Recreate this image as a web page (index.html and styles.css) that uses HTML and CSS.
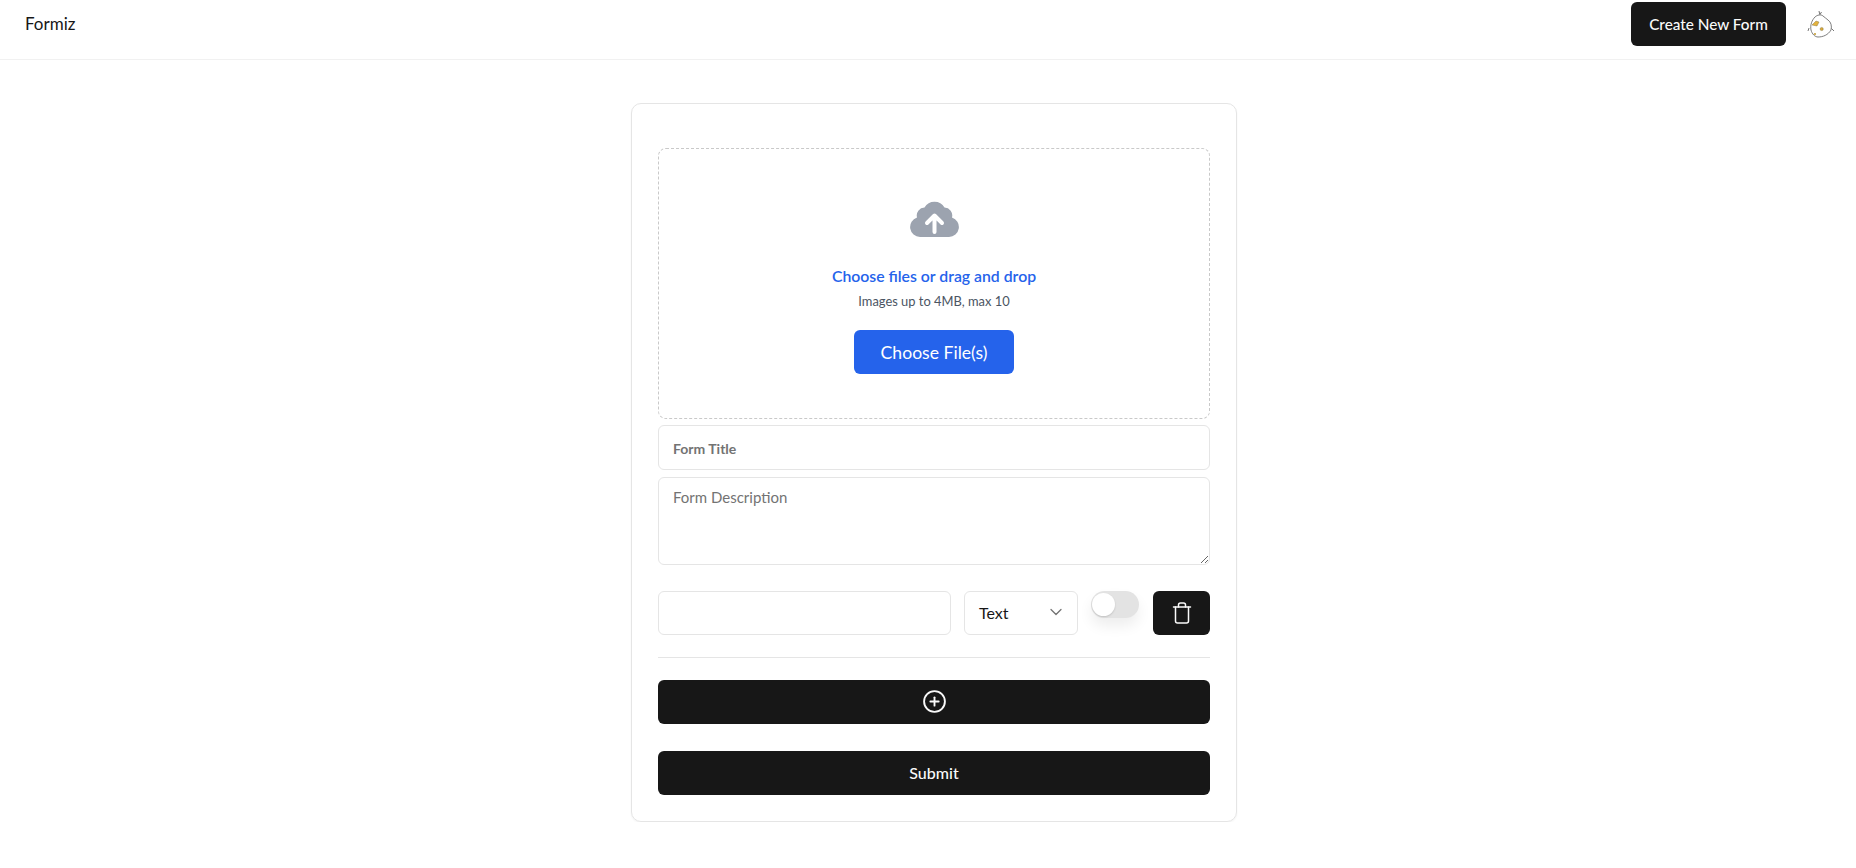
FILE: index.html
```html
<!DOCTYPE html>
<html lang="en">
<head>
    <meta charset="UTF-8">
    <meta name="viewport" content="width=device-width, initial-scale=1.0">
    <title>Formiz</title>
    <link rel="stylesheet" href="styles.css">
</head>
<body>
    <header class="topbar">
        <a class="brand" href="#">Formiz</a>
        <div class="topbar-actions">
            <button class="btn-create" type="button">Create New Form</button>
            <svg class="avatar" viewBox="0 0 28 28" aria-hidden="true">
                <path d="M4 20c-1-5 1-10 4-13 2-2 6-3 8-1 2 1 3 3 5 4 3 2 4 6 3 10-3 5-8 7-13 7-3 0-6-3-7-7z" fill="#fff" stroke="#6f6f6f" stroke-width=".9"/>
                <path d="M5 15l4-4 3 1-2 4z" fill="#e3b23c" stroke="#7a6a3a" stroke-width=".4"/>
                <circle cx="14.700" cy="19" r="1.600" fill="#d9a93a" stroke="#7a6a3a" stroke-width=".4"/>
                <circle cx="8" cy="24" r="1.100" fill="#c9a038"/>
                <path d="M12 1l.8 3.500M14.500 2l-1.500 2.500M1 21l1-3M27 21l-2.500-2.500" stroke="#666" stroke-width=".9" fill="none"/>
            </svg>
        </div>
    </header>

    <main class="page">
        <form class="form-card">
            <div class="dropzone">
                <svg class="cloud" viewBox="0 0 49 36" aria-hidden="true">
                    <path class="cloud-shape" d="M10 36A10 10 0 0 1 7 16.500A8 8 0 0 1 14.500 6.500A11.500 11.500 0 0 1 34.500 6.500A8 8 0 0 1 42 16.500A10 10 0 0 1 39 36Z"/>
                    <path class="cloud-arrow" d="M24.500 31V15M17 22l7.500-7.500L32 22"/>
                </svg>
                <span class="drop-label">Choose files or drag and drop</span>
                <span class="drop-hint">Images up to 4MB, max 10</span>
                <button class="btn-choose" type="button">Choose File(s)</button>
            </div>

            <input class="field field-title" type="text" placeholder="Form Title">
            <textarea class="field field-desc" placeholder="Form Description"></textarea>

            <div class="question-row">
                <input class="field field-question" type="text">
                <button class="type-select" type="button">
                    <span>Text</span>
                    <svg class="icon-chevron" viewBox="0 0 24 24" aria-hidden="true"><path d="m6 9 6 6 6-6"/></svg>
                </button>
                <span class="toggle"><span class="toggle-thumb"></span></span>
                <button class="btn-delete" type="button" aria-label="Delete">
                    <svg class="icon-line" viewBox="0 0 24 24" aria-hidden="true">
                        <path d="M3.500 6h17"/>
                        <path d="M18.500 6v14c0 1-1 2-2 2h-9c-1 0-2-1-2-2V6"/>
                        <path d="M8.500 6V4c0-1 1-2 2-2h3c1 0 2 1 2 2v2"/>
                    </svg>
                </button>
            </div>

            <hr class="divider">

            <button class="btn-wide btn-add" type="button" aria-label="Add question">
                <svg class="icon-line" viewBox="0 0 24 24" aria-hidden="true">
                    <circle cx="12" cy="12" r="10"/>
                    <path d="M8 12h8"/>
                    <path d="M12 8v8"/>
                </svg>
            </button>
            <button class="btn-wide btn-submit" type="submit">Submit</button>
        </form>
    </main>
</body>
</html>
```

FILE: styles.css
```css
* {
    box-sizing: border-box;
}

body {
    margin: 0;
    background: #fff;
    color: #171717;
    font-family: Lato, "Open Sans", sans-serif;
}

button,
input,
textarea {
    font-family: inherit;
}

.topbar {
    display: flex;
    justify-content: space-between;
    align-items: center;
    height: 60px;
    padding: 0 21px 11px 25px;
    border-bottom: 1px solid #f1f1f1;
}

.brand {
    margin-bottom: 2px;
    color: #171717;
    font-size: 17px;
    text-decoration: none;
}

.topbar-actions {
    display: flex;
    align-items: center;
    gap: 21px;
}

.btn-create {
    width: 155px;
    height: 44px;
    padding-bottom: 2px;
    border: none;
    border-radius: 6px;
    background: #171717;
    color: #fafafa;
    font-size: 15.3px;
    font-weight: 500;
}

.avatar {
    width: 28px;
    height: 28px;
}

.page {
    display: flex;
    justify-content: center;
    padding: 43px 0 0 12px;
}

.form-card {
    display: flex;
    flex-direction: column;
    width: 606px;
    height: 719px;
    padding: 44px 26px 0;
    border: 1px solid #e5e5e5;
    border-radius: 10px;
    box-shadow: 0 1px 2px rgba(0, 0, 0, 0.05);
}

.dropzone {
    display: flex;
    flex-direction: column;
    align-items: center;
    height: 271px;
    padding-top: 52px;
    border: 1px dashed #c9c9c9;
    border-radius: 8px;
}

.cloud {
    width: 49px;
    height: 36px;
    flex: none;
}

.cloud-shape {
    fill: #9ca3af;
}

.cloud-arrow {
    fill: none;
    stroke: #fff;
    stroke-width: 4;
    stroke-linecap: round;
    stroke-linejoin: round;
}

.drop-label {
    margin-top: 29px;
    color: #2563eb;
    font-size: 15.8px;
    font-weight: 600;
}

.drop-hint {
    margin-top: 8px;
    color: #4b5563;
    font-size: 12.9px;
}

.btn-choose {
    width: 160px;
    height: 44px;
    margin-top: 21px;
    border: none;
    border-radius: 6px;
    background: #2563eb;
    color: #fff;
    font-size: 17.6px;
}

.field {
    display: block;
    width: 100%;
    padding: 0 14px;
    border: 1px solid #e5e5e5;
    border-radius: 6px;
    background: #fff;
    font-size: 15px;
    outline: none;
}

.field::placeholder {
    color: #737373;
}

.field-title {
    height: 45px;
    margin-top: 6px;
}

.field-title::placeholder {
    font-size: 14px;
    font-weight: 700;
}

.field-desc {
    height: 88px;
    margin-top: 7px;
    padding-top: 10px;
}

.question-row {
    display: flex;
    align-items: flex-start;
    margin-top: 26px;
}

.field-question {
    width: 293px;
    height: 44px;
}

.type-select {
    display: flex;
    justify-content: space-between;
    align-items: center;
    width: 114px;
    height: 44px;
    padding: 0 11px 2px 14px;
    margin-left: 13px;
    border: 1px solid #e5e5e5;
    border-radius: 6px;
    background: #fff;
    color: #171717;
    font-size: 16px;
}

.icon-chevron {
    width: 20px;
    height: 20px;
    fill: none;
    stroke: #737373;
    stroke-width: 1.5;
    stroke-linecap: round;
    stroke-linejoin: round;
}

.toggle {
    display: flex;
    align-items: center;
    width: 48px;
    height: 27px;
    margin-left: 13px;
    padding-left: 1px;
    border-radius: 14px;
    background: #e3e3e3;
    box-shadow: 0 8px 14px rgba(0, 0, 0, 0.07);
}

.toggle-thumb {
    width: 23px;
    height: 23px;
    border-radius: 50%;
    background: #fff;
    box-shadow: 0 1px 2px rgba(0, 0, 0, 0.15);
}

.btn-delete {
    display: flex;
    justify-content: center;
    align-items: center;
    width: 57px;
    height: 44px;
    margin-left: 14px;
    border: none;
    border-radius: 6px;
    background: #171717;
}

.icon-line {
    width: 25px;
    height: 25px;
    fill: none;
    stroke: #fafafa;
    stroke-width: 1.8;
    stroke-linecap: round;
    stroke-linejoin: round;
}

.btn-delete .icon-line {
    width: 24px;
    height: 24px;
    stroke-width: 1.5;
}

.divider {
    width: 100%;
    margin: 22px 0 0;
    border: none;
    border-top: 1px solid #e5e5e5;
}

.btn-wide {
    display: flex;
    justify-content: center;
    align-items: center;
    width: 100%;
    height: 44px;
    padding-bottom: 2px;
    border: none;
    border-radius: 6px;
    background: #171717;
    color: #fafafa;
    font-size: 16px;
    font-weight: 500;
}

.btn-add {
    margin-top: 22px;
}

.btn-submit {
    margin-top: 27px;
}
```
